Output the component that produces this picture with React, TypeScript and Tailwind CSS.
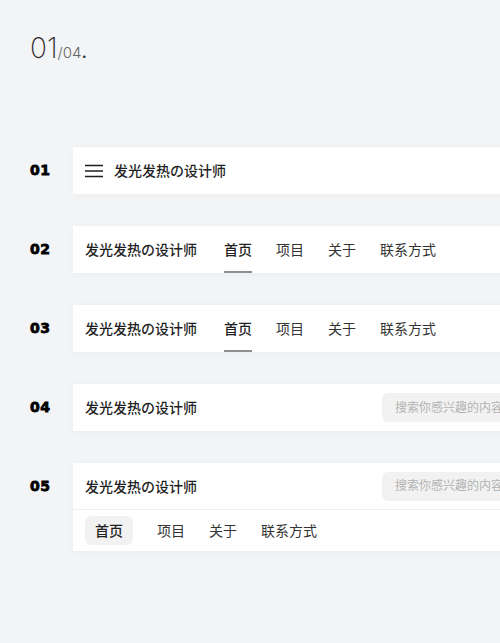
const cjk = { fontFamily: '"Inter", "Noto Sans CJK SC", sans-serif' };
const label = { fontFamily: '"DejaVu Sans", sans-serif' };

const links = ["首页", "项目", "关于", "联系方式"];

function Brand() {
  return <span className="text-[14px] font-medium text-[#1f1f1f] whitespace-nowrap">发光发热の设计师</span>;
}

function Search() {
  return (
    <div className="ml-auto h-[29px] w-[200px] shrink-0 flex items-center rounded-md bg-[#f2f2f2] pl-[13px] text-[12px] text-[#b3b3b3] whitespace-nowrap">
      搜索你感兴趣的内容
    </div>
  );
}

function UnderlineNav() {
  return (
    <nav className="ml-[27px] flex h-full gap-6">
      {links.map((l, i) => (
        <span
          key={l}
          className={
            i === 0
              ? "flex h-full items-center border-y-2 border-t-transparent border-b-[#8f8f8f] text-[14px] font-medium text-[#1f1f1f]"
              : "flex h-full items-center text-[14px] text-[#333]"
          }
        >
          {l}
        </span>
      ))}
    </nav>
  );
}

function Row({ n, children }: { n: string; children: React.ReactNode }) {
  return (
    <div className="flex items-start">
      <div
        className="w-[43px] shrink-0 h-[47px] flex items-center text-[14px] font-bold text-black tracking-[0.5px] [-webkit-text-stroke:0.8px_black]"
        style={label}
      >
        {n}
      </div>
      <div className="w-[519px] shrink-0 bg-white shadow-[0_1px_8px_rgba(0,0,0,0.035)]">{children}</div>
    </div>
  );
}

export default function App() {
  return (
    <div className="min-h-[643px] w-[500px] overflow-hidden bg-[#f3f4f6] pl-[30px] pt-[34px]" style={cjk}>
      <div className="flex items-baseline">
        <span className="text-[28px] font-extralight leading-none text-[#2a2a2a]">01</span>
        <span className="text-[15px] font-light text-[#666]">/04</span>
        <span className="text-[18px] font-medium text-[#333]">.</span>
      </div>

      <div className="mt-[82px] flex flex-col gap-8">
        <Row n="01">
          <div className="flex h-[47px] items-center pl-3">
            <svg width="18" height="14" viewBox="0 0 18 14" className="mr-[11px]">
              <path d="M0 1.5h18M0 7h18M0 12.5h18" stroke="#1f1f1f" strokeWidth="1.6" />
            </svg>
            <Brand />
          </div>
        </Row>

        <Row n="02">
          <div className="flex h-[47px] items-center pl-3">
            <Brand />
            <UnderlineNav />
          </div>
        </Row>

        <Row n="03">
          <div className="flex h-[47px] items-center pl-3">
            <Brand />
            <UnderlineNav />
          </div>
        </Row>

        <Row n="04">
          <div className="flex h-[47px] items-center pl-3 pr-[10px]">
            <Brand />
            <Search />
          </div>
        </Row>

        <Row n="05">
          <div className="flex h-[47px] items-center border-b border-[#efefef] pl-3 pr-[10px]">
            <Brand />
            <Search />
          </div>
          <div className="flex h-[41px] items-center gap-6 pl-3">
            {links.map((l, i) => (
              <span
                key={l}
                className={
                  i === 0
                    ? "rounded-md bg-[#f2f2f2] px-[10px] py-[4px] text-[14px] font-medium text-[#1f1f1f]"
                    : "text-[14px] text-[#333]"
                }
              >
                {l}
              </span>
            ))}
          </div>
        </Row>
      </div>
    </div>
  );
}
